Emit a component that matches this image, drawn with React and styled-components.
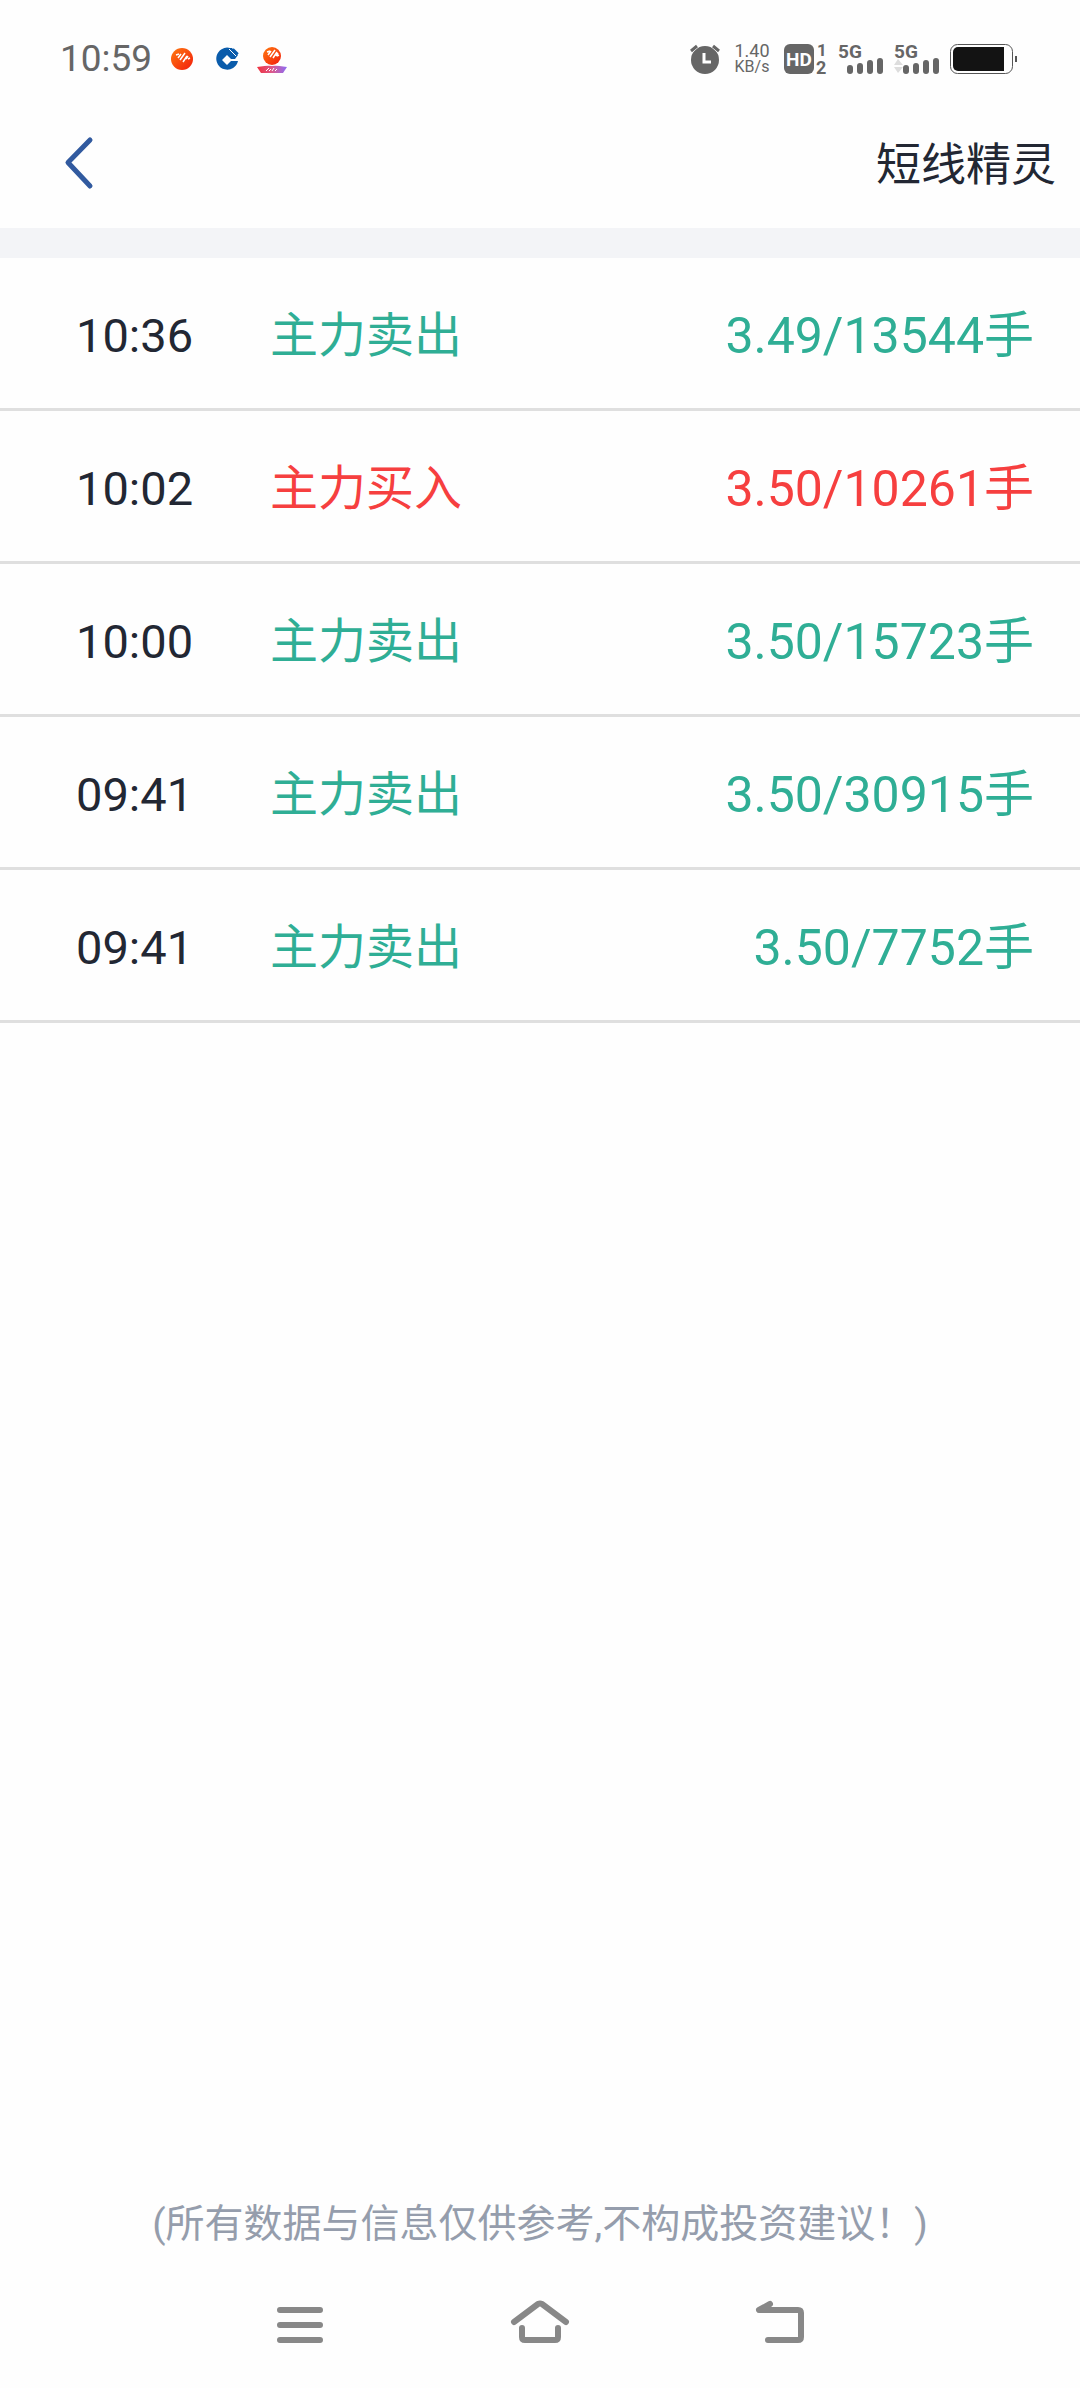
import React from 'react';
import styled, { createGlobalStyle } from 'styled-components'


const GlobalStyle = createGlobalStyle`
  * {
    box-sizing: border-box;
  }
  body {
    margin: 0;
    background: #fefefe;
    color: #222733;
    font-family: Roboto, "Noto Sans CJK SC", sans-serif;
  }
  svg {
    display: block;
    flex: none;
    overflow: visible;
  }
`

const Page = styled.div`
  display: flex;
  flex-direction: column;
  min-height: 100vh;
`

const StatusBar = styled.div`
  display: flex;
  align-items: center;
  justify-content: space-between;
  height: 98px;
  padding: 20px 63px 0 60px;
  color: #666;
`

const StatusGroup = styled.div`
  display: flex;
  align-items: center;
  gap: ${({ $gap }) => $gap}px;
`

const Clock = styled.span`
  font-size: 37px;
  line-height: 40px;
`

const Speed = styled.div`
  display: flex;
  flex-direction: column;
  align-items: center;
  width: 42px;
  font-size: 18px;
  line-height: 16px;
`

const SpeedUnit = styled.span`
  font-size: 16px;
`

const Header = styled.header`
  display: flex;
  align-items: center;
  justify-content: space-between;
  height: 130px;
  padding: 0 24px 0 54px;
`

const IconButton = styled.button`
  display: flex;
  align-items: center;
  justify-content: center;
  padding: 0;
  border: 0;
  background: none;
  color: ${({ $color }) => $color || '#888'};
  &:hover {
    cursor: pointer;
  }
`

const Title = styled.h1`
  margin: 0;
  padding-top: 6px;
  font-size: 45px;
  font-weight: 400;
  line-height: 60px;
`

const Content = styled.main`
  flex: 1;
  border-top: 30px solid #f3f4f7;
`

const Table = styled.table`
  width: 100%;
  border-spacing: 0;
`

const Cell = styled.td`
  height: 153px;
  padding: 6px 0 0;
  border-bottom: 3px solid #dfdfdf;
  font-size: 48px;
  line-height: 60px;
`

const TimeCell = styled(Cell)`
  width: 25%;
  padding-left: 76px;
  font-size: 47px;
`

const TypeCell = styled(Cell)`
  color: ${({ $buy }) => ($buy ? '#f63f3f' : '#2fae95')};
`

const DealCell = styled(TypeCell)`
  padding-right: 46px;
  font-size: 50px;
  text-align: right;
`

const Note = styled.p`
  margin: 0;
  padding-top: 2px;
  color: #959dac;
  font-size: 39px;
  line-height: 76px;
  text-align: center;
`

const NavBar = styled.nav`
  display: grid;
  grid-template-columns: repeat(3, 1fr);
  height: 126px;
  padding: 0 16.6667%;
`

const rows = [
  { time: '10:36', buy: false, deal: '3.49/13544手' },
  { time: '10:02', buy: true, deal: '3.50/10261手' },
  { time: '10:00', buy: false, deal: '3.50/15723手' },
  { time: '09:41', buy: false, deal: '3.50/30915手' },
  { time: '09:41', buy: false, deal: '3.50/7752手' },
]

const BrokerIcon = () => (
  <svg width="30" height="30" viewBox="0 0 30 30">
    <defs>
      <linearGradient id="orange" x1="0" y1="0" x2="1" y2="1">
        <stop offset="0" stopColor="#ff7a10" />
        <stop offset="1" stopColor="#f21c0c" />
      </linearGradient>
    </defs>
    <circle cx="15" cy="15" r="11" fill="url(#orange)" />
    <path d="M9 11l3-1M11 14l3-4M13 16l5-7M16 18l4-6M19 15l2-3M21 15l2-1" stroke="#fff" strokeWidth="1.500" fill="none" />
  </svg>
)

const BankIcon = () => (
  <svg width="30" height="30" viewBox="0 0 30 30">
    <path d="M18 4h2l6 7-3 4h-4l-4-4-5 5 5 5 4-4h7A11 11 0 1 1 18 4z" fill="#0a5cab" />
    <path d="M17 5l7 7" stroke="#fff" strokeWidth="1" />
    <path d="M21 5l5 5" stroke="#0a5cab" strokeWidth="2" />
  </svg>
)

const BrokerBannerIcon = () => (
  <svg width="30" height="30" viewBox="0 0 30 30">
    <defs>
      <linearGradient id="banner">
        <stop offset="0" stopColor="#f0303c" />
        <stop offset="0.5" stopColor="#dc5a8c" />
        <stop offset="1" stopColor="#8c6cf6" />
      </linearGradient>
    </defs>
    <path d="M0 23Q15 20 30 23L26 29H4z" fill="url(#banner)" />
    <circle cx="15" cy="12" r="10" fill="#fff" />
    <circle cx="15" cy="12" r="9" fill="url(#orange)" />
    <path d="M10 8l3-1M11 11l3-4M13 13l5-7M16 14l4-6M19 12l2-3M20 12l2-1" stroke="#fff" strokeWidth="1.500" fill="none" />
    <path d="M9 27l3-3M12 27l2-2M15 27l2-3M18 27l2-2" stroke="#fff" strokeWidth="1" />
  </svg>
)

const AlarmIcon = () => (
  <svg width="30" height="30" viewBox="0 0 30 30">
    <circle cx="15" cy="16" r="14" fill="#666" />
    <path d="M0 9L9 1M30 9L21 1" stroke="#fefefe" strokeWidth="3" />
    <path d="M1 7l6-5M29 7l-6-5" stroke="#666" strokeWidth="3" />
    <path d="M14 9v9h7" stroke="#fff" strokeWidth="3" fill="none" />
  </svg>
)

const HdIcon = () => (
  <svg width="43" height="30" viewBox="0 0 43 30" fill="#666" fontWeight="700">
    <rect width="30" height="30" rx="6" />
    <text x="15" y="22" fontSize="19" textAnchor="middle" fill="#fff">HD</text>
    <text x="33" y="12" fontSize="17">1</text>
    <text x="32" y="30" fontSize="18">2</text>
  </svg>
)

const SignalIcon = ({ arrows }) => (
  <svg width="45" height="30" viewBox="0 0 45 30" fill="#666">
    <text x="0" y="14" fontSize="19" fontWeight="700">5G</text>
    {arrows && <path d="M0 21l4-6 5 6zM0 23h9l-5 6z" fill="#ddd" />}
    <rect x="9" y="21" width="6" height="9" rx="3" />
    <rect x="19" y="19" width="6" height="11" rx="3" />
    <rect x="29" y="16" width="6" height="14" rx="3" />
    <rect x="39" y="14" width="6" height="16" rx="3" />
  </svg>
)

const BatteryIcon = () => (
  <svg width="67" height="30" viewBox="0 0 67 30">
    <rect x="0.500" y="0.500" width="62" height="29" rx="7" fill="none" stroke="#555" />
    <path d="M8 3h46v24H8a5 5 0 0 1-5-5V8a5 5 0 0 1 5-5z" fill="#131313" />
    <rect x="65" y="12" width="2" height="6" fill="#555" />
  </svg>
)

const stroke = { fill: 'none', stroke: 'currentColor', strokeLinecap: 'round', strokeLinejoin: 'round' }

const App = () => {
  return (
    <Page>
      <GlobalStyle />
      <StatusBar>
        <StatusGroup $gap={15}>
          <Clock>10:59</Clock>
          <BrokerIcon />
          <BankIcon />
          <BrokerBannerIcon />
        </StatusGroup>
        <StatusGroup $gap={11}>
          <AlarmIcon />
          <Speed>
            <span>1.40</span>
            <SpeedUnit>KB/s</SpeedUnit>
          </Speed>
          <HdIcon />
          <SignalIcon />
          <SignalIcon arrows />
          <BatteryIcon />
        </StatusGroup>
      </StatusBar>
      <Header>
        <IconButton type="button" aria-label="返回" $color="#315a9f">
          <svg width="50" height="60" viewBox="0 0 50 60" {...stroke} strokeWidth="5">
            <path d="M36 7L14 29.500L36 53" />
          </svg>
        </IconButton>
        <Title>短线精灵</Title>
      </Header>
      <Content>
        <Table>
          <tbody>
            {rows.map(({ time, buy, deal }, i) => (
              <tr key={i}>
                <TimeCell>{time}</TimeCell>
                <TypeCell $buy={buy}>{buy ? '主力买入' : '主力卖出'}</TypeCell>
                <DealCell $buy={buy}>{deal}</DealCell>
              </tr>
            ))}
          </tbody>
        </Table>
      </Content>
      <Note>(所有数据与信息仅供参考,不构成投资建议！)</Note>
      <NavBar>
        <IconButton type="button" aria-label="菜单">
          <svg width="60" height="50" viewBox="0 0 60 50" {...stroke} strokeWidth="6">
            <path d="M10 10h40M10 25h40M10 40h40" />
          </svg>
        </IconButton>
        <IconButton type="button" aria-label="主页">
          <svg width="60" height="50" viewBox="0 0 60 50" {...stroke} strokeWidth="6">
            <path d="M4 22L28 4q2-1 4 0L56 22M12 28v9q0 3 3 3h30q3 0 3-3v-9" />
          </svg>
        </IconButton>
        <IconButton type="button" aria-label="后退">
          <svg width="60" height="50" viewBox="0 0 60 50" {...stroke} strokeWidth="6">
            <path d="M20 4L9 10h39q3 0 3 3v24q0 3-3 3H18" />
          </svg>
        </IconButton>
      </NavBar>
    </Page>
  );
};

export default App;
